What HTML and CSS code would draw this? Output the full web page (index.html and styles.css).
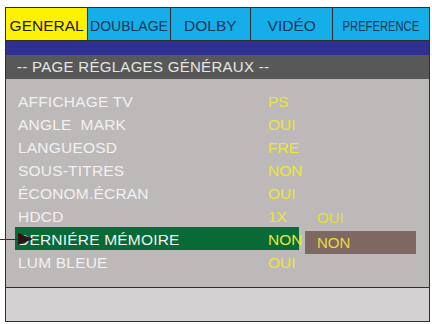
FILE: index.html
```html
<!DOCTYPE html>
<html lang="fr">
<head>
    <meta charset="UTF-8">
    <title>Réglages généraux</title>
    <link rel="stylesheet" href="styles.css">
</head>
<body>

    <div class="screen">
        <div class="tabs">
            <div class="tab tab-general active">GENERAL</div>
            <div class="tab tab-doublage small">DOUBLAGE</div>
            <div class="tab tab-dolby">DOLBY</div>
            <div class="tab tab-video">VIDÉO</div>
            <div class="tab tab-pref"><span class="narrow">PREFERENCE</span></div>
        </div>
        <div class="blue-bar"></div>
        <div class="page-title">-- PAGE RÉGLAGES GÉNÉRAUX --</div>

        <div class="settings">
            <div class="row"><span class="label">AFFICHAGE TV</span><span class="value">PS</span></div>
            <div class="row"><span class="label">ANGLE&nbsp; MARK</span><span class="value">OUI</span></div>
            <div class="row"><span class="label">LANGUEOSD</span><span class="value">FRE</span></div>
            <div class="row"><span class="label">SOUS-TITRES</span><span class="value">NON</span></div>
            <div class="row"><span class="label">ÉCONOM.ÉCRAN</span><span class="value">OUI</span></div>
            <div class="row"><span class="label">HDCD</span><span class="value">1X</span></div>
            <div class="row selected"><span class="label">DERNIÉRE MÉMOIRE</span><span class="value">NON</span></div>
            <div class="row"><span class="label">LUM BLEUE</span><span class="value">OUI</span></div>

            <!-- choix pour la ligne sélectionnée -->
            <div class="popup">
                <div class="option">OUI</div>
                <div class="option current">NON</div>
            </div>
        </div>

        <div class="footer"></div>
    </div>

    <div class="pointer">
        <div class="pointer-line"></div>
        <div class="pointer-head"></div>
    </div>

</body>
</html>
```

FILE: styles.css
```css
body {
    margin: 0;
    background: #ffffff;
    font-family: "Liberation Sans", Arial, sans-serif;
    position: relative;
}
.screen {
    margin: 7px 0 0 5px;
    width: 425px;
    height: 315px;
    border: 1px solid #2f2f2f;
    box-sizing: border-box;
    display: flex;
    flex-direction: column;
}
.tabs {
    display: flex;
    height: 33px;
    border-bottom: 1px solid #2f2f2f;
    box-sizing: border-box;
}
.tab {
    display: flex;
    align-items: center;
    justify-content: center;
    padding-top: 3px;
    box-sizing: border-box;
    background: #16aee8;
    color: #17385a;
    font-size: 15.5px;
    border-left: 1px solid #2f2f2f;
}
.tab.active {
    background: #fff200;
    color: #1c1c1c;
    border-left: none;
}
.tab.small {
    font-size: 14px;
}
.tab-general { width: 85px; }
.tab-doublage { width: 86px; }
.tab-dolby { width: 84px; }
.tab-video { width: 86px; }
.tab-pref { flex: 1; }
.narrow {
    display: inline-block;
    font-size: 14px;
    transform: scaleX(0.8);
}
.blue-bar {
    height: 14px;
    background: #2e3192;
}
.page-title {
    height: 24px;
    line-height: 24px;
    background: #585858;
    color: #e6e6e6;
    font-size: 15px;
    padding-left: 11px;
    letter-spacing: 0.3px;
}
.settings {
    position: relative;
    height: 209px;
    background: #bdb9b9;
    padding-top: 10px;
    box-sizing: border-box;
    border-bottom: 1px solid #2f2f2f;
}
.row {
    display: flex;
    height: 23px;
    padding-top: 3px;
    box-sizing: border-box;
    line-height: 20px;
    font-size: 15.5px;
    margin: 0 130px 0 9px;
    padding-left: 3px;
    white-space: nowrap;
}
.label {
    flex: none;
    width: 250px;
    color: #f1f1f1;
    letter-spacing: 0.2px;
}
.value {
    flex: none;
    color: #ede53a;
}
.row.selected {
    background: #076a37;
}
.popup {
    position: absolute;
    left: 299px;
    top: 127px;
    width: 111px;
}
.option {
    height: 23px;
    line-height: 23px;
    padding-left: 12px;
    font-size: 15px;
    color: #e6dd3c;
}
.option.current {
    background: #7f6862;
    margin-top: 2px;
}
.footer {
    flex: 1;
    background: #d3d1d1;
}
.pointer {
    position: absolute;
    left: 0;
    top: 233px;
    display: flex;
    align-items: center;
}
.pointer-line {
    width: 19px;
    height: 1px;
    background: #333333;
}
.pointer-head {
    width: 0;
    height: 0;
    border-top: 6px solid transparent;
    border-bottom: 6px solid transparent;
    border-left: 15px solid #2b1515;
    margin-left: -1px;
}
```
